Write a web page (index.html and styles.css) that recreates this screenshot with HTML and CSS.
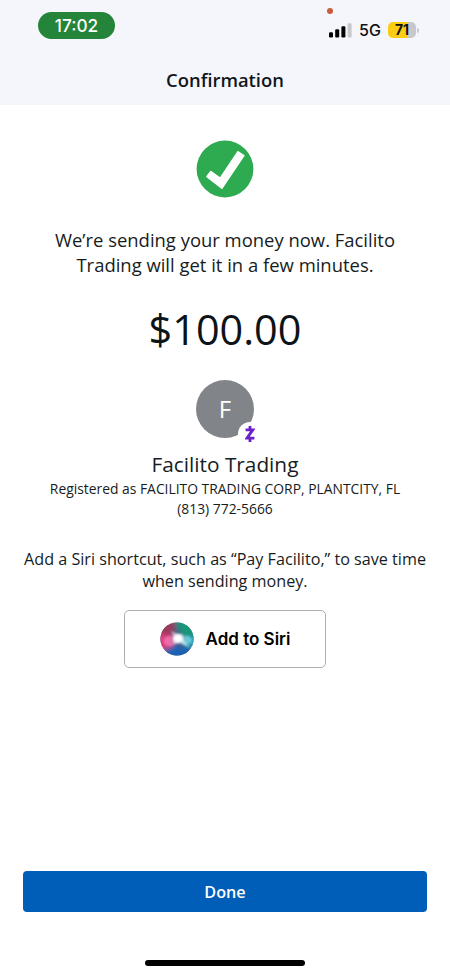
FILE: index.html
```html
<!DOCTYPE html>
<html lang="en">
<head>
<meta charset="utf-8">
<meta name="viewport" content="width=device-width, initial-scale=1">
<title>Confirmation</title>
<link rel="stylesheet" href="styles.css">
</head>
<body>
<div class="screen">
  <header class="header">
    <div class="status">
      <span class="clock">17:02</span>
      <div class="indicators">
        <span class="mic-dot"></span>
        <svg class="signal" width="23" height="15" viewBox="0 0 23 15" aria-hidden="true">
          <rect x="0" y="9.3" width="4" height="5.2" rx="1.2"/>
          <rect x="6.2" y="6.3" width="4" height="8.2" rx="1.2"/>
          <rect x="12.4" y="3.3" width="4" height="11.2" rx="1.2"/>
          <rect x="18.6" y="0.3" width="4" height="14.2" rx="1.2" fill="#c6c8cb"/>
        </svg>
        <span class="network">5G</span>
        <span class="battery">71</span>
        <span class="battery-cap"></span>
      </div>
    </div>
    <h1 class="title">Confirmation</h1>
  </header>
  <main class="content">
    <svg class="check" width="58" height="58" viewBox="0 0 58 58" aria-hidden="true">
      <circle cx="29" cy="29" r="28.4" fill="#2eaa50"/>
      <path d="M42 11.8 47.8 15.6 25.8 48.2 11 36.6 14.9 31.6 24.3 38.3Z" fill="#fff" stroke="#fff" stroke-width="1.6" stroke-linejoin="round"/>
    </svg>
    <p class="message">We’re sending your money now. Facilito<br>Trading will get it in a few minutes.</p>
    <p class="amount">$100.00</p>
    <div class="avatar">
      <span class="initial">F</span>
      <span class="badge">
        <svg width="10" height="18" viewBox="0 0 10 18" aria-hidden="true">
          <path d="M.6 4.9H7.8L2 13.1H9.4M5 .9V4.9M5 13.1V17.1" fill="none" stroke="#6a1fc9" stroke-width="2.8"/>
        </svg>
      </span>
    </div>
    <h2 class="name">Facilito Trading</h2>
    <p class="detail">Registered as FACILITO TRADING CORP, PLANTCITY, FL</p>
    <p class="detail phone">(813) 772-5666</p>
    <p class="hint">Add a Siri shortcut, such as “Pay Facilito,” to save time<br>when sending money.</p>
    <button class="siri" type="button">
      <svg width="34" height="34" viewBox="0 0 34 34" aria-hidden="true">
        <defs>
          <clipPath id="orb"><circle cx="17" cy="17" r="16.6"/></clipPath>
          <filter id="soft" x="-50%" y="-50%" width="200%" height="200%"><feGaussianBlur stdDeviation="2.2"/></filter>
          <filter id="glow" x="-50%" y="-50%" width="200%" height="200%"><feGaussianBlur stdDeviation=".9"/></filter>
        </defs>
        <g clip-path="url(#orb)">
          <rect width="34" height="34" fill="#4a628c"/>
          <g filter="url(#soft)">
            <path d="M-4-4H15L14 13-4 14Z" fill="#9a3a5c"/>
            <path d="M14-4H38V15L22 14Z" fill="#189877"/>
            <path d="M-4 11 13 14 13 24 0 29Z" fill="#e33d80"/>
            <path d="M24 15H38V26L25 24Z" fill="#2aa3b6"/>
            <path d="M2 30 16 24 33 26 30 38H4Z" fill="#1c62b4"/>
          </g>
          <ellipse cx="10" cy="19" rx="6.4" ry="5.2" fill="#f08fc4" opacity=".6" filter="url(#glow)"/>
          <ellipse cx="26" cy="18" rx="6" ry="4.4" fill="#80dbe8" opacity=".7" filter="url(#glow)"/>
          <path d="M11 9 18 12 23 12 23 17 30 26 20 21 13 22 14 17Z" fill="#fff" opacity=".55" filter="url(#glow)"/>
          <ellipse cx="18" cy="16.5" rx="4.8" ry="4.2" fill="#fff" filter="url(#glow)"/>
        </g>
      </svg>
      <span>Add to Siri</span>
    </button>
  </main>
  <footer class="footer">
    <button class="done" type="button">Done</button>
    <div class="home"></div>
  </footer>
</div>
</body>
</html>
```
FILE: styles.css
```css
* { box-sizing: border-box; }
body { margin: 0; background: #fff; font-family: "Open Sans", sans-serif; color: #161c22; }
h1, h2, p { margin: 0; font-weight: 400; }
button { font: inherit; padding: 0; }
svg { display: block; }
.screen { width: 450px; height: 975px; display: flex; flex-direction: column; overflow: hidden; }
.header { height: 105px; flex: none; background: #f4f6fb; }
.status { height: 62px; padding: 12px 31px 0 38px; display: flex; justify-content: space-between; align-items: flex-start; }
.clock { width: 77px; height: 27px; border-radius: 14px; background: #23843a; color: #fff; font: 450 17.3px/28px Inter, sans-serif; text-align: center; }
.indicators { position: relative; display: flex; align-items: center; height: 36px; }
.mic-dot { position: absolute; left: -2px; top: -4px; width: 6px; height: 6px; border-radius: 50%; background: #c95c38; }
.network { margin-left: 7px; width: 22px; font: 450 16px/18px Inter, sans-serif; color: #111; }
.battery { margin-left: 7px; width: 28px; height: 16px; border-radius: 5px; background: linear-gradient(90deg, #facd12 71%, #c6c8cb 71%); font: 650 14px/16px Inter, sans-serif; text-align: center; color: #111; }
.battery-cap { margin-left: 1px; width: 2px; height: 5px; border-radius: 0 2px 2px 0; background: #c6c8cb; }
.title { font-size: 18.4px; line-height: 36px; font-weight: 580; text-align: center; color: #11161b; }
.content { flex: 1; display: flex; flex-direction: column; align-items: center; text-align: center; padding-top: 35px; }
.message { margin-top: 29px; font-size: 18.45px; line-height: 25px; white-space: nowrap; }
.amount { margin-top: 25px; font-size: 41.4px; line-height: 54px; color: #0c1319; }
.avatar { position: relative; width: 58px; height: 58px; margin-top: 24px; border-radius: 50%; background: #818589; }
.initial { display: block; color: #fff; font-size: 24px; line-height: 58px; }
.badge { position: absolute; left: 42px; top: 42px; width: 24px; height: 24px; border-radius: 50%; background: #fff; display: flex; align-items: center; justify-content: center; }
.name { margin-top: 12px; font-size: 20.8px; line-height: 29px; }
.detail { font-size: 13.87px; line-height: 20px; white-space: nowrap; }
.hint { margin-top: 29px; font-size: 16.17px; line-height: 22px; white-space: nowrap; }
.siri { margin-top: 18px; width: 202px; height: 58px; border: 1px solid #aeb0b2; border-radius: 5px; background: #fff; display: flex; align-items: center; justify-content: center; gap: 12px; color: #000; font: 600 17px/22px Inter, sans-serif; }
.footer { height: 104px; flex: none; display: flex; flex-direction: column; align-items: center; }
.done { width: 404px; height: 41px; border: 0; border-radius: 4px; background: #005eb8; color: #fff; font-size: 16.2px; font-weight: 560; line-height: 42px; }
.home { margin-top: 48px; width: 160px; height: 6px; border-radius: 3px; background: #000; }
```
